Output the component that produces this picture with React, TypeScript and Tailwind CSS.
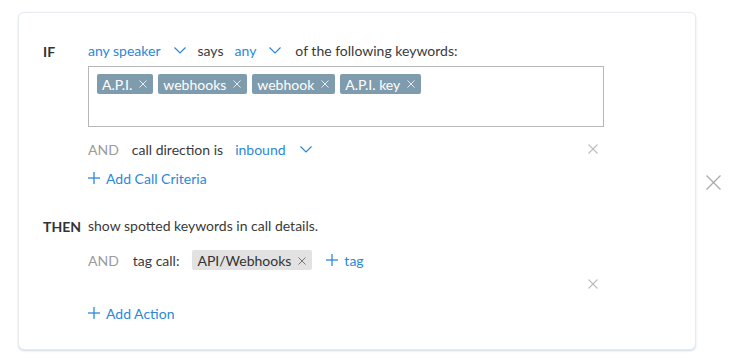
import React from "react";

const font = { fontFamily: "Lato, 'Noto Sans', sans-serif" };

function Chevron() {
  return (
    <svg width="12" height="7" viewBox="0 0 12 7" className="shrink-0">
      <polyline points="0.5,0.5 6,6 11.5,0.5" fill="none" stroke="#2b88d8" strokeWidth="1.2" />
    </svg>
  );
}

function XIcon({ size = 10, color = "#b5b5b5", w = 1.1 }: { size?: number; color?: string; w?: number }) {
  return (
    <svg width={size} height={size} viewBox={`0 0 ${size} ${size}`} className="shrink-0">
      <line x1="0.5" y1="0.5" x2={size - 0.5} y2={size - 0.5} stroke={color} strokeWidth={w} />
      <line x1={size - 0.5} y1="0.5" x2="0.5" y2={size - 0.5} stroke={color} strokeWidth={w} />
    </svg>
  );
}

function Plus() {
  return (
    <svg width="12" height="12" viewBox="0 0 12 12" className="shrink-0">
      <line x1="6" y1="0" x2="6" y2="12" stroke="#2b88d8" strokeWidth="1.3" />
      <line x1="0" y1="6" x2="12" y2="6" stroke="#2b88d8" strokeWidth="1.3" />
    </svg>
  );
}

function KTag({ label }: { label: string }) {
  return (
    <div className="flex h-[20px] items-center gap-[7px] rounded-[2px] bg-[#7f9cae] pl-[5px] pr-[6px] pt-[1px] text-[14px] text-white">
      <span>{label}</span>
      <XIcon size={8} color="#e4ecf1" w={1} />
    </div>
  );
}

export default function App() {
  return (
    <div className="flex h-[359px] w-[740px] items-center bg-white text-[#3a3a3a]" style={font}>
      <div className="ml-[18px] mt-[2px] flex h-[338px] w-[678px] flex-col rounded-[6px] border border-[#e7ebef] bg-white pl-[24px] pt-[24px] shadow-[0_1px_2px_rgba(120,150,180,0.35)]">
        {/* IF */}
        <div className="flex">
          <div className="w-[45px] shrink-0 pt-[3px] text-[14px] font-bold leading-[24px] text-[#333]">IF</div>
          <div className="flex flex-col">
            <div className="flex h-[24px] items-center pt-[3px] text-[14px]">
              <span className="text-[#2b88d8]">any speaker</span>
              <span className="ml-[13px]"><Chevron /></span>
              <span className="ml-[12px]">says</span>
              <span className="ml-[11px] text-[#2b88d8]">any</span>
              <span className="ml-[13px]"><Chevron /></span>
              <span className="ml-[14px]">of the following keywords:</span>
            </div>
            <div className="mt-[5px] flex h-[61px] w-[516px] items-start gap-[5px] border border-[#b7b7b7] pl-[8px] pt-[7px]">
              <KTag label="A.P.I." />
              <KTag label="webhooks" />
              <KTag label="webhook" />
              <KTag label="A.P.I. key" />
            </div>
            <div className="mt-[9px] flex h-[24px] w-[516px] items-center pt-[3px] text-[14px]">
              <span className="text-[#9b9b9b]">AND</span>
              <span className="ml-[13px]">call direction is</span>
              <span className="ml-[12px] text-[#2b88d8]">inbound</span>
              <span className="ml-[14px]"><Chevron /></span>
              <span className="ml-auto mr-[6px]"><XIcon size={10} color="#bdbdbd" /></span>
            </div>
            <div className="mt-[5px] flex h-[24px] items-center gap-[6px] pt-[3px] text-[14px] text-[#2b88d8]">
              <Plus />
              <span>Add Call Criteria</span>
            </div>
          </div>
        </div>
        {/* THEN */}
        <div className="mt-[23px] flex">
          <div className="w-[45px] shrink-0 pt-[3px] text-[14px] font-bold leading-[24px] text-[#333]">THEN</div>
          <div className="flex flex-col">
            <div className="flex h-[24px] items-center pt-[3px] text-[14px]">show spotted keywords in call details.</div>
            <div className="mt-[11px] flex h-[24px] w-[516px] items-center pt-[3px] text-[14px]">
              <span className="text-[#9b9b9b]">AND</span>
              <span className="ml-[14px]">tag call:</span>
              <div className="ml-[13px] flex h-[20px] items-center gap-[7px] rounded-[2px] bg-[#e2e2e2] pl-[5px] pr-[6px] pt-[1px] text-[#333]">
                <span>API/Webhooks</span>
                <XIcon size={8} color="#777" w={1} />
              </div>
              <span className="ml-[14px] flex items-center gap-[6px] text-[#2b88d8]">
                <Plus />
                <span>tag</span>
              </span>
            </div>
            <div className="flex h-[24px] w-[516px] items-center justify-end pr-[6px] pt-[2px]">
              <XIcon size={10} color="#bdbdbd" />
            </div>
            <div className="mt-[5px] flex h-[24px] items-center gap-[6px] pt-[3px] text-[14px] text-[#2b88d8]">
              <Plus />
              <span>Add Action</span>
            </div>
          </div>
        </div>
      </div>
      <div className="ml-[10px] mt-[6px]">
        <XIcon size={15} color="#aaaaaa" w={1.3} />
      </div>
    </div>
  );
}
